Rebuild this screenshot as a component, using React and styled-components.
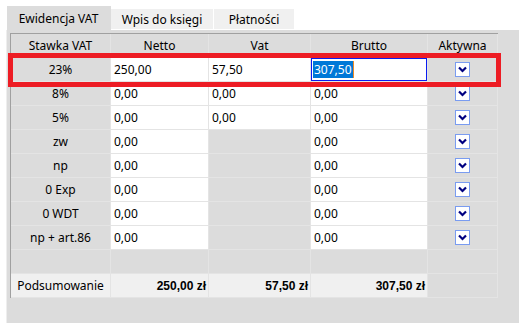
import React from "react";
import styled, { createGlobalStyle } from "styled-components";

const Global = createGlobalStyle`
  html, body { margin: 0; padding: 0; background: #fff; }
  body { font-family: "Noto Sans", "Open Sans", sans-serif; font-size: 12px; color: #000; }
`;

const Root = styled.div`
  position: relative;
  width: 519px;
  height: 323px;
  overflow: hidden;
  background: #fff;
`;

const TabStrip = styled.div`
  display: flex;
  align-items: flex-start;
  height: 30px;
  padding-left: 7px;
  box-sizing: border-box;
`;

const Tab = styled.div`
  box-sizing: border-box;
  height: ${(p) => (p.$active ? "24px" : "20px")};
  margin-top: ${(p) => (p.$active ? "6px" : "9px")};
  width: ${(p) => p.$w}px;
  display: flex;
  align-items: center;
  justify-content: center;
  background: ${(p) => (p.$active ? "#dcdcdc" : "#f0f0f0")};
  border-right: 1px solid ${(p) => (p.$active ? "#dcdcdc" : "#fff")};
  white-space: nowrap;
  padding-top: ${(p) => (p.$active ? "0" : "1px")};
`;

const Panel = styled.div`
  margin-left: 6px;
  height: 293px;
  background: #dcdcdc;
  border-left: 1px solid #eeeeee;
  box-sizing: border-box;
  padding: 3px 0 0 3px;
`;

const Grid = styled.div`
  display: grid;
  grid-template-columns: 100px 98px 102px 117px 70px;
  grid-auto-rows: 24px;
  width: max-content;
  border-top: 1px solid #a0a0a0;
  border-left: 1px solid #a0a0a0;
  box-shadow: inset 1px 0 0 #e6e6e6;
`;

const Cell = styled.div`
  box-sizing: border-box;
  border-right: 1px solid #e4e4e4;
  border-bottom: 1px solid #e4e4e4;
  background: ${(p) => (p.$white ? "#fff" : p.$sum ? "#f0f0f0" : "#dcdcdc")};
  display: flex;
  align-items: center;
  justify-content: ${(p) => (p.$align === "left" ? "flex-start" : p.$align === "right" ? "flex-end" : "center")};
  padding: ${(p) => (p.$align === "left" ? "0 0 1px 3px" : p.$align === "right" ? "0 2px 0 0" : "0")};
  white-space: nowrap;
  font-weight: ${(p) => (p.$bold ? 700 : 400)};
  font-family: ${(p) => (p.$bold ? '"Liberation Sans", Arial, sans-serif' : "inherit")};
`;

const HeadCell = styled(Cell)`
  height: 23px;
`;

const Editor = styled.div`
  box-sizing: border-box;
  width: 100%;
  height: 100%;
  background: #fff;
  border: 1px solid #0a1cf0;
  display: flex;
  align-items: center;
  padding: 0 0 1px 1px;
`;

const Selected = styled.span`
  background: #0078d7;
  color: #fff;
  padding: 0 1px;
  border-right: 1px solid #f08a24;
`;

const Check = styled.div`
  box-sizing: border-box;
  width: 15px;
  height: 15px;
  border: 1px solid #7a9cf0;
  background: #fff;
  display: flex;
  align-items: center;
  justify-content: center;
`;

const Highlight = styled.div`
  position: absolute;
  left: 8px;
  top: 53px;
  width: 493px;
  height: 34px;
  box-sizing: border-box;
  border: 5px solid #ed1c24;
  pointer-events: none;
`;

const Chevron = () => (
  <svg width="9" height="7" viewBox="0 0 9 7">
    <polyline points="1,1.5 4.5,5 8,1.5" fill="none" stroke="#000080" strokeWidth="2.2" />
  </svg>
);

const rows = [
  { label: "23%", netto: "250,00", vat: "57,50", brutto: "307,50", active: true },
  { label: "8%", netto: "0,00", vat: "0,00", brutto: "0,00" },
  { label: "5%", netto: "0,00", vat: "0,00", brutto: "0,00" },
  { label: "zw", netto: "0,00", vat: null, brutto: "0,00" },
  { label: "np", netto: "0,00", vat: null, brutto: "0,00" },
  { label: "0 Exp", netto: "0,00", vat: null, brutto: "0,00" },
  { label: "0 WDT", netto: "0,00", vat: null, brutto: "0,00" },
  { label: "np + art.86", netto: "0,00", vat: null, brutto: "0,00" },
];

export default function App() {
  return (
    <Root>
      <Global />
      <TabStrip>
        <Tab $active $w={104}>Ewidencja VAT</Tab>
        <Tab $w={103}>Wpis do księgi</Tab>
        <Tab $w={81}>Płatności</Tab>
      </TabStrip>
      <Panel>
        <Grid>
          <HeadCell>Stawka VAT</HeadCell>
          <HeadCell>Netto</HeadCell>
          <HeadCell>Vat</HeadCell>
          <HeadCell>Brutto</HeadCell>
          <HeadCell>Aktywna</HeadCell>
          {rows.map((r) => (
            <React.Fragment key={r.label}>
              <Cell>{r.label}</Cell>
              <Cell $white $align="left">{r.netto}</Cell>
              {r.vat !== null ? (
                <Cell $white $align="left">{r.vat}</Cell>
              ) : (
                <Cell />
              )}
              {r.active ? (
                <Cell $white>
                  <Editor>
                    <Selected>{r.brutto}</Selected>
                  </Editor>
                </Cell>
              ) : (
                <Cell $white $align="left">{r.brutto}</Cell>
              )}
              <Cell>
                <Check>
                  <Chevron />
                </Check>
              </Cell>
            </React.Fragment>
          ))}
          <Cell />
          <Cell />
          <Cell />
          <Cell />
          <Cell />
          <Cell $sum>Podsumowanie</Cell>
          <Cell $sum $bold $align="right">250,00 zł</Cell>
          <Cell $sum $bold $align="right">57,50 zł</Cell>
          <Cell $sum $bold $align="right">307,50 zł</Cell>
          <Cell />
        </Grid>
      </Panel>
      <Highlight />
    </Root>
  );
}
